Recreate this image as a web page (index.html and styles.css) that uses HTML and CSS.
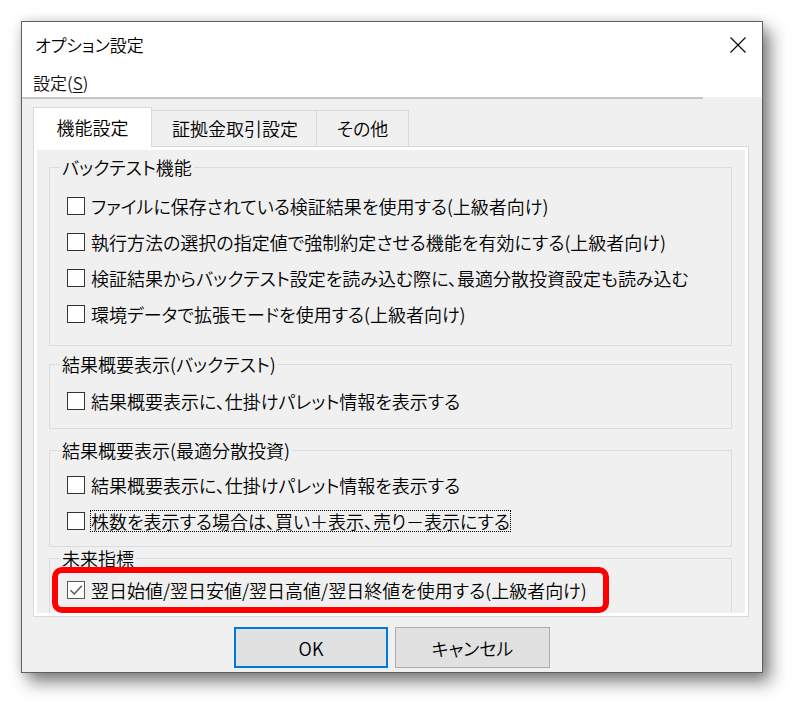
FILE: index.html
```html
<!DOCTYPE html>
<html lang="ja">
<head>
<meta charset="utf-8">
<title>オプション設定</title>
<link rel="stylesheet" href="styles.css">
</head>
<body>
<div class="screen">
  <div class="window">
    <div class="titlebar">
      <div class="title">オプション設定</div>
      <div class="close">
        <svg width="16" height="16" viewBox="0 0 16 16"><path d="M0.5 0.5 L15.5 15.5 M15.5 0.5 L0.5 15.5" stroke="#000" stroke-width="1.1" fill="none"/></svg>
      </div>
    </div>
    <div class="menubar"><span class="menu-item">設定(<u>S</u>)</span></div>
    <div class="menusep"></div>
    <div class="tabs">
      <div class="tab tab-active">機能設定</div>
      <div class="tab tab-2">証拠金取引設定</div>
      <div class="tab tab-3">その他</div>
    </div>
    <div class="panel">
      <div class="page">
        <fieldset class="group group-1">
          <legend>バックテスト機能</legend>
          <div class="row"><span class="box"></span><span class="label">ファイルに保存されている検証結果を使用する(上級者向け)</span></div>
          <div class="row"><span class="box"></span><span class="label">執行方法の選択の指定値で強制約定させる機能を有効にする(上級者向け)</span></div>
          <div class="row"><span class="box"></span><span class="label">検証結果からバックテスト設定を読み込む際に、最適分散投資設定も読み込む</span></div>
          <div class="row"><span class="box"></span><span class="label">環境データで拡張モードを使用する(上級者向け)</span></div>
        </fieldset>
        <fieldset class="group group-2">
          <legend>結果概要表示(バックテスト)</legend>
          <div class="row"><span class="box"></span><span class="label">結果概要表示に、仕掛けパレット情報を表示する</span></div>
        </fieldset>
        <fieldset class="group group-3">
          <legend>結果概要表示(最適分散投資)</legend>
          <div class="row"><span class="box"></span><span class="label">結果概要表示に、仕掛けパレット情報を表示する</span></div>
          <div class="row"><span class="box"></span><span class="label focus">株数を表示する場合は、買い＋表示、売り－表示にする</span></div>
        </fieldset>
        <fieldset class="group group-4">
          <legend>未来指標</legend>
          <div class="row row-marked">
            <span class="box box-checked"><svg width="16" height="16" viewBox="0 0 16 16"><path d="M2.5 8.2 L6.3 12 L13.8 3.8" stroke="#555" stroke-width="1.4" fill="none"/></svg></span>
            <span class="label">翌日始値/翌日安値/翌日高値/翌日終値を使用する(上級者向け)</span>
            <span class="highlight"></span>
          </div>
        </fieldset>
      </div>
    </div>
    <div class="buttons">
      <button class="btn btn-default">OK</button>
      <button class="btn">キャンセル</button>
    </div>
  </div>
</div>
</body>
</html>
```

FILE: styles.css
```css
html, body {
  margin: 0;
  padding: 0;
  background: #ffffff;
}

body {
  font-family: "Noto Sans CJK JP", "Noto Sans", sans-serif;
  font-feature-settings: "palt";
  font-weight: 350;
  color: #000;
}

.screen {
  padding: 21px 0 0 21px;
  width: 806px;
  height: 715px;
  box-sizing: border-box;
  overflow: hidden;
}

.window {
  width: 742px;
  height: 652px;
  box-sizing: border-box;
  border: 1px solid #5f5f5f;
  background: #f0f0f0;
  box-shadow: 7px 9px 16px rgba(0, 0, 0, 0.5), 0 0 10px rgba(0, 0, 0, 0.12);
  display: flex;
  flex-direction: column;
}

.titlebar {
  height: 46px;
  background: #fff;
  display: flex;
  align-items: center;
  justify-content: space-between;
}

.title {
  padding-left: 13px;
  font-size: 17px;
  line-height: 22px;
}

.close {
  width: 48px;
  height: 46px;
  display: flex;
  align-items: center;
  justify-content: center;
}

.menubar {
  height: 29px;
  background: #fff;
  display: flex;
  align-items: center;
  padding-left: 11px;
}

.menu-item {
  font-size: 17px;
  line-height: 22px;
  color: #111;
}

.menu-item u {
  text-underline-offset: 2px;
}

.menusep {
  width: 681px;
  height: 2px;
  background: #c6c6c6;
}

.tabs {
  display: flex;
  align-items: flex-end;
  height: 39px;
  margin-top: 8px;
  margin-left: 11px;
}

.tab {
  height: 36px;
  box-sizing: border-box;
  border: 1px solid #d9d9d9;
  border-left: none;
  border-bottom: none;
  background: #f0f0f0;
  font-size: 18px;
  line-height: 34px;
  text-align: center;
}

.tab-active {
  width: 119px;
  height: 40px;
  margin-bottom: -1px;
  border-left: 1px solid #d9d9d9;
  background: #fff;
  line-height: 38px;
  position: relative;
  z-index: 1;
}

.tab-2 {
  width: 165px;
  padding-left: 2px;
}

.tab-3 {
  width: 92px;
}

.panel {
  width: 716px;
  height: 471px;
  margin-left: 11px;
  box-sizing: border-box;
  border: 1px solid #d9d9d9;
  padding: 3px;
  background: #fff;
}

.page {
  height: 463px;
  background: #f0f0f0;
  overflow: hidden;
}

.group {
  width: 683px;
  box-sizing: border-box;
  margin: 0 0 0 12px;
  border: 1px solid #dcdcdc;
  padding: 0 10px;
  min-inline-size: 0;
}

.group legend {
  font-size: 18px;
  line-height: 22px;
  padding: 0 2px;
  color: #000;
}

.group-1 {
  margin-top: 6px;
  padding-top: 10px;
  padding-bottom: 13px;
}

.group-2 {
  margin-top: 7px;
  padding-top: 8px;
  padding-bottom: 9px;
}

.group-3 {
  margin-top: 10px;
  padding-top: 6px;
  padding-bottom: 7px;
}

.group-4 {
  margin-top: 0;
  padding-top: 3px;
  padding-bottom: 20px;
}

.row {
  height: 36px;
  display: flex;
  align-items: center;
  padding-left: 7px;
  position: relative;
}

.box {
  width: 18px;
  height: 18px;
  box-sizing: border-box;
  border: 1px solid #333;
  background: #fff;
  margin-right: 6px;
  flex: none;
  display: flex;
  align-items: center;
  justify-content: center;
}

.box-checked {
  border-color: #555;
}

.label {
  font-size: 18px;
  line-height: 20px;
  white-space: nowrap;
}

.focus {
  outline: 1px dotted #000;
  outline-offset: 0;
}

.highlight {
  position: absolute;
  left: -8px;
  top: -5px;
  width: 557px;
  height: 46px;
  box-sizing: border-box;
  border: 6px solid #ff0000;
  border-radius: 10px;
  pointer-events: none;
}

.buttons {
  display: flex;
  justify-content: center;
  gap: 7px;
  margin-top: 10px;
}

.btn {
  width: 155px;
  height: 41px;
  box-sizing: border-box;
  border: 1px solid #adadad;
  background: #e1e1e1;
  font-family: "Noto Sans CJK JP", "Noto Sans", sans-serif;
  font-feature-settings: "palt";
  font-weight: 350;
  font-size: 18px;
  color: #000;
  padding: 0;
}

.btn-default {
  width: 154px;
  border: 2px solid #0078d7;
}
```
